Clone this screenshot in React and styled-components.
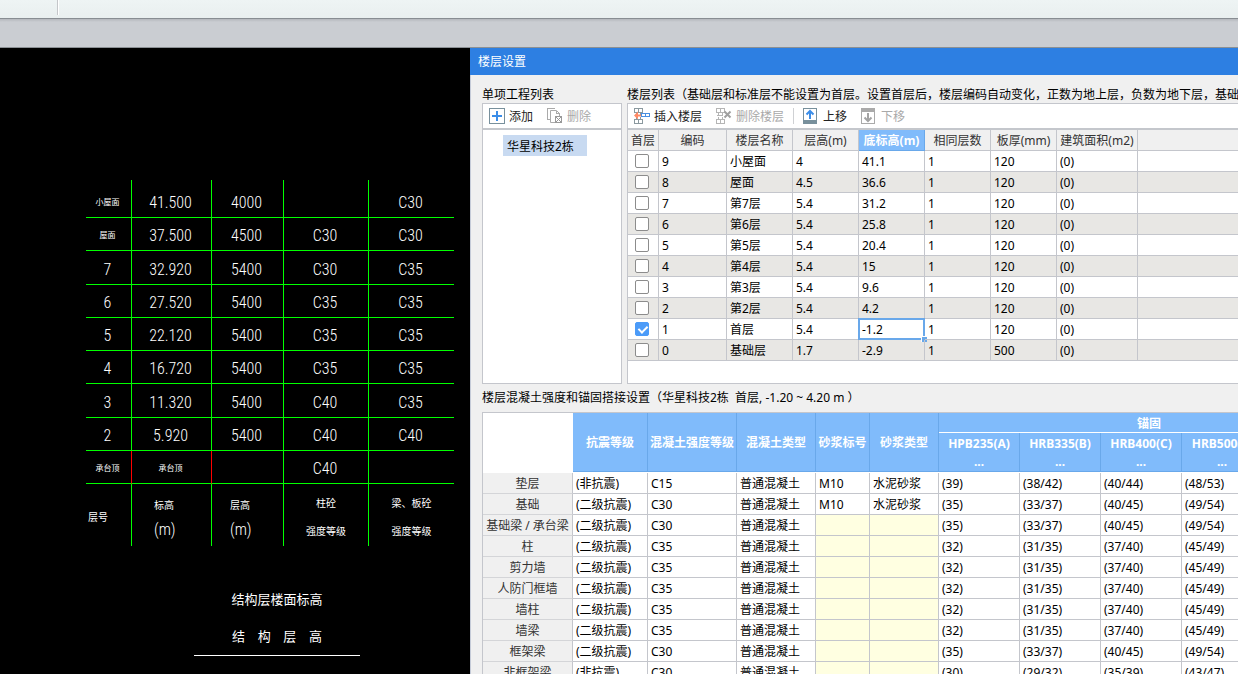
import React from "react";
import styled, { createGlobalStyle } from "styled-components";

const GlobalStyle = createGlobalStyle`
	* {
		box-sizing: border-box;
	}

	body {
		margin: 0;
		background: #000;
		color: #000;
		font: 12px/16px "Noto Sans", "Noto Sans CJK SC", sans-serif;
	}
`;

const Page = styled.div`
	display: flex;
	flex-direction: column;
	height: 100vh;
	overflow: hidden;
`;

const Ribbon = styled.header`
	flex: none;
	height: 19px;
	padding-left: 57px;
	background: linear-gradient(#eef4f4, #e9efef);
	border-bottom: 1px solid #888d92;
`;

const RibbonDivider = styled.div`
	width: 2px;
	height: 15px;
	background: #c4c6c9;
	border-right: 1px solid #fff;
`;

const Strip = styled.div`
	flex: none;
	height: 29px;
	background: linear-gradient(#b4b7bc, #cacdd2 3px);
	border-bottom: 1px solid #8b9094;
`;

const Workspace = styled.main`
	flex: 1;
	min-height: 0;
	display: grid;
	grid-template-columns: 470px minmax(0, 1fr);
`;

/* drawing */

const Drawing = styled.section`
	padding: 132px 16px 0 86px;
	background: #000;
	color: #fff;
	font-family: "Liberation Sans Narrow", "Roboto Condensed", "Liberation Sans",
		"Noto Sans CJK SC", sans-serif;
	overflow: hidden;
`;

const DrawingTable = styled.table`
	width: 100%;
	table-layout: fixed;
	border-spacing: 0;
`;

const DrawingCell = styled.td`
	padding: 4px 2px 0 0;
	text-align: center;
	line-height: 20px;
	font-size: ${(p) => (p.$small ? "8px" : "16px")};
	font-weight: ${(p) => (p.$small ? "normal" : 300)};
	border-right: 1px solid ${(p) => (p.$red ? "#f00" : "#0f0")};
	border-bottom: 1px solid #0f0;

	&:last-child {
		border-right: 0;
	}
`;

const DrawingRow = styled.tr`
	height: 33px;

	&:first-child {
		height: 38px;
	}

	&:first-child ${DrawingCell} {
		padding-top: 8px;
	}

	&:nth-child(4n + 3) {
		height: 34px;
	}
`;

const LegendRow = styled.tr`
	height: 62px;
`;

const LegendCell = styled.th`
	padding: 6px 0 0 ${(p) => p.$indent || 0}px;
	text-align: ${(p) => (p.$indent ? "left" : "center")};
	font-size: 10px;
	font-weight: normal;
	line-height: ${(p) => (p.$indent ? 24 : 28)}px;
	border-right: 1px solid #0f0;

	&:last-child {
		border-right: 0;
	}
`;

const Unit = styled.div`
	font-size: 16px;
	font-weight: 300;
`;

const DrawingTitle = styled.div`
	width: 166px;
	margin: 35px 0 0 108px;
	font-size: 13px;
	line-height: 37px;
	text-align: center;
	border-bottom: 1px solid #fff;
`;

const SpacedLine = styled.div`
	display: flex;
	justify-content: space-between;
	padding: 0 38px;
`;

/* dialog */

const Dialog = styled.section`
	display: flex;
	flex-direction: column;
	min-width: 0;
	background: #f0f0f0;
	overflow: hidden;
`;

const TitleBar = styled.h1`
	flex: none;
	margin: 0;
	padding-left: 8px;
	background: #2d7fe2;
	color: #fff;
	font-size: 12px;
	font-weight: normal;
	line-height: 27px;
`;

const DialogBody = styled.div`
	flex: 1;
	min-height: 0;
	padding: 11px 0 0 11px;
	border-left: 1px solid #c5cbd8;
	overflow: hidden;
`;

const Groups = styled.div`
	display: grid;
	grid-template-columns: 140px minmax(0, 1fr);
	column-gap: 5px;
`;

const Group = styled.section`
	display: flex;
	flex-direction: column;
	min-width: 0;
`;

const GroupTitle = styled.h2`
	margin: 0;
	font-size: 12px;
	font-weight: normal;
	line-height: ${(p) => (p.$tall ? 28 : 17)}px;
	white-space: pre;
`;

const Panel = styled.div`
	flex: 1;
	padding-bottom: ${(p) => (p.$padded ? 22 : 0)}px;
	background: #fff;
	border: 1px solid #c4c6cc;
	border-right-width: ${(p) => (p.$open ? 0 : 1)}px;
	overflow: hidden;
`;

const Toolbar = styled.div`
	display: flex;
	align-items: center;
	gap: 4px;
	height: 26px;
	padding-left: 1px;
	border-bottom: 2px solid #c4c7cc;
`;

const ToolButton = styled.button`
	display: flex;
	align-items: center;
	gap: 4px;
	height: 22px;
	padding: 0 5px;
	border: 0;
	background: none;
	font: inherit;
	color: #222;
	white-space: nowrap;

	&:disabled {
		color: #a9a9a9;
	}

	svg {
		flex: none;
	}
`;

const ToolLabel = styled.span`
	padding-top: 2px;
`;

const ToolDivider = styled.div`
	width: 1px;
	height: 16px;
	background: #cfd1d4;
`;

const ProjectList = styled.ul`
	margin: 5px 34px 0 20px;
	padding: 0;
	list-style: none;
`;

const ProjectItem = styled.li`
	padding: 2px 0 0 4px;
	background: #c8daf1;
	line-height: 19px;
`;

const Grid = styled.table`
	width: 100%;
	table-layout: fixed;
	border-spacing: 0;
	white-space: nowrap;
`;

const HeadCell = styled.th`
	height: 21px;
	padding: 2px 0 0;
	background: ${(p) => (p.$active ? "#80bbfb" : "#f0f0f0")};
	color: ${(p) => (p.$active ? "#fff" : "#333")};
	font-weight: ${(p) => (p.$active ? "bold" : "normal")};
	border-right: 1px solid ${(p) => (p.$active ? "#69a8ea" : "#c4c6cc")};
	border-bottom: 1px solid ${(p) => (p.$active ? "#69a8ea" : "#c4c6cc")};
`;

const Cell = styled.td`
	position: relative;
	height: 21px;
	padding: 2px 0 0 3px;
	border-right: 1px solid #c4c6cc;
	border-bottom: 1px solid #c4c6cc;
	background: ${(p) => (p.$disabled ? "#ffffe1" : "transparent")};
`;

const FloorRow = styled.tr`
	&:nth-child(even) {
		background: #e8e7e4;
	}

	${Cell}:first-child {
		padding-top: 0;
	}

	${Cell}:last-child,
	${HeadCell}:last-child {
		border-right: 0;
	}
`;

const Selection = styled.div`
	position: absolute;
	inset: -1px;
	border: 2px solid #69a8ea;

	&::after {
		content: "";
		position: absolute;
		right: -4px;
		bottom: -4px;
		width: 5px;
		height: 5px;
		background: #69a8ea;
		border-top: 1px solid #fff;
		border-left: 1px solid #fff;
	}
`;

const CheckBox = styled.input.attrs({ type: "checkbox" })`
	appearance: none;
	display: block;
	position: relative;
	width: 14px;
	height: 14px;
	margin: 0 0 0 4px;
	background: #fff;
	border: 1px solid #8c8c8c;
	border-radius: 2px;

	&:checked {
		background: #4b9bf8;
		border-color: #4b9bf8;
	}

	&:checked::after {
		content: "";
		position: absolute;
		left: 4px;
		top: 1px;
		width: 4px;
		height: 7px;
		border: solid #fff;
		border-width: 0 2px 2px 0;
		transform: rotate(45deg);
	}
`;

const BlueHead = styled.th`
	height: ${(p) => (p.$group ? 20 : 39)}px;
	padding: ${(p) => (p.$group ? 2 : 1)}px 0 0;
	background: #80bbfb;
	color: #fff;
	font-weight: bold;
	line-height: ${(p) => (p.$group ? 17 : 18)}px;
	border-right: 1px solid #69a8ea;
	border-bottom: 1px solid ${(p) => (p.$group ? "#fff" : "#69a8ea")};
`;

const Corner = styled.td`
	background: #fff;
`;

const RowHead = styled.th`
	padding: 2px 0 0;
	background: #f0f0f0;
	color: #333;
	font-weight: normal;
	border-right: 1px solid #c4c6cc;
	border-bottom: 1px solid #d4d5d8;
`;

const StrengthBody = styled.tbody`
	&::before {
		content: "";
		display: table-row;
		height: 1px;
	}
`;

/* icons */

const Icon = ({ children }) => (
	<svg
		width="16"
		height="16"
		viewBox="0 0 16 16"
		fill="none"
		shapeRendering="crispEdges"
		aria-hidden="true"
	>
		{children}
	</svg>
);

const AddIcon = () => (
	<Icon>
		<rect x="0.5" y="0.5" width="15" height="15" stroke="#78909c" />
		<path d="M3 8h10M8 3v10" stroke="#3b8de8" strokeWidth="2" />
	</Icon>
);

const DeleteIcon = () => (
	<Icon>
		<path d="M2.5 11.5h-2v-11h7" stroke="#aaa" />
		<path
			d="M8 14.5H3.5v-12h6l3 3V8"
			stroke="#aaa"
			shapeRendering="auto"
		/>
		<path d="M9.5 2.5v3h3" stroke="#aaa" />
		<rect x="8.5" y="8.5" width="6" height="6" stroke="#999" />
		<path d="M9 9l5 5M14 9l-5 5" stroke="#999" />
	</Icon>
);

const Bricks = ({ stroke }) => (
	<path
		d="M0.5 0.5h8v4h-8zM4.5 0.5v4M2.5 4.5v2M6.5 4.5v2M2.5 9v2M6.5 9v2M0.5 11.5h8v4h-8zM4.5 11.5v4"
		stroke={stroke}
	/>
);

const InsertFloorIcon = () => (
	<Icon>
		<Bricks stroke="#8b999f" />
		<path d="M0 7.5l4-4v3h3v2H4v3z" fill="#ff8a65" shapeRendering="auto" />
		<path d="M7.5 5.5h8v3h-8zM11.5 5.5v3" stroke="#4a90e2" />
	</Icon>
);

const DeleteFloorIcon = () => (
	<Icon>
		<Bricks stroke="#b5b5b5" />
		<path d="M0.5 7.5h6" stroke="#b5b5b5" />
		<path
			d="M8.5 3.5l6 6M14.5 3.5l-6 6"
			stroke="#a0a0a0"
			strokeWidth="2"
			shapeRendering="auto"
		/>
	</Icon>
);

const MoveUpIcon = () => (
	<Icon>
		<path d="M0.5 0.5h13v13h-13z" stroke="#78909c" />
		<path d="M0 12h14v4H0z" fill="#78909c" />
		<path
			d="M7 11V3.5M3.5 6.5L7 3l3.5 3.5"
			stroke="#3b8de8"
			strokeWidth="2"
			shapeRendering="auto"
		/>
	</Icon>
);

const MoveDownIcon = () => (
	<Icon>
		<path d="M0.5 2.5h13v13h-13z" stroke="#aaa" />
		<path d="M0 0h14v4H0z" fill="#aaa" />
		<path
			d="M7 5v7.5M3.5 9.5L7 13l3.5-3.5"
			stroke="#a3a3a3"
			strokeWidth="2"
			shapeRendering="auto"
		/>
	</Icon>
);

/* data */

const drawingRows = [
	["小屋面", "41.500", "4000", "", "C30"],
	["屋面", "37.500", "4500", "C30", "C30"],
	["7", "32.920", "5400", "C30", "C35"],
	["6", "27.520", "5400", "C35", "C35"],
	["5", "22.120", "5400", "C35", "C35"],
	["4", "16.720", "5400", "C35", "C35"],
	["3", "11.320", "5400", "C40", "C35"],
	["2", "5.920", "5400", "C40", "C40"],
	["承台顶", "承台顶", "", "C40", ""],
];

const floorColumns = [
	["首层", 31],
	["编码", 68],
	["楼层名称", 66],
	["层高(m)", 66],
	["底标高(m)", 66],
	["相同层数", 66],
	["板厚(mm)", 66],
	["建筑面积(m2)", 81],
];

const floors = [
	["9", "小屋面", "4", "41.1", "1", "120", "(0)"],
	["8", "屋面", "4.5", "36.6", "1", "120", "(0)"],
	["7", "第7层", "5.4", "31.2", "1", "120", "(0)"],
	["6", "第6层", "5.4", "25.8", "1", "120", "(0)"],
	["5", "第5层", "5.4", "20.4", "1", "120", "(0)"],
	["4", "第4层", "5.4", "15", "1", "120", "(0)"],
	["3", "第3层", "5.4", "9.6", "1", "120", "(0)"],
	["2", "第2层", "5.4", "4.2", "1", "120", "(0)"],
	["1", "首层", "5.4", "-1.2", "1", "120", "(0)"],
	["0", "基础层", "1.7", "-2.9", "1", "500", "(0)"],
];

const strengthColumns = [
	["抗震等级", 75],
	["混凝土强度等级", 89],
	["混凝土类型", 79],
	["砂浆标号", 54],
	["砂浆类型", 69],
];

const steels = ["HPB235(A)", "HRB335(B)", "HRB400(C)", "HRB500(E)"];

const second = "(二级抗震)";
const none = "(非抗震)";
const plain = "普通混凝土";

const strengths = [
	["垫层", none, "C15", plain, "M10", "水泥砂浆", "(39)", "(38/42)", "(40/44)", "(48/53)"],
	["基础", second, "C30", plain, "M10", "水泥砂浆", "(35)", "(33/37)", "(40/45)", "(49/54)"],
	["基础梁 / 承台梁", second, "C30", plain, "", "", "(35)", "(33/37)", "(40/45)", "(49/54)"],
	["柱", second, "C35", plain, "", "", "(32)", "(31/35)", "(37/40)", "(45/49)"],
	["剪力墙", second, "C35", plain, "", "", "(32)", "(31/35)", "(37/40)", "(45/49)"],
	["人防门框墙", second, "C35", plain, "", "", "(32)", "(31/35)", "(37/40)", "(45/49)"],
	["墙柱", second, "C35", plain, "", "", "(32)", "(31/35)", "(37/40)", "(45/49)"],
	["墙梁", second, "C35", plain, "", "", "(32)", "(31/35)", "(37/40)", "(45/49)"],
	["框架梁", second, "C30", plain, "", "", "(35)", "(33/37)", "(40/45)", "(49/54)"],
	["非框架梁", none, "C30", plain, "", "", "(30)", "(29/32)", "(35/39)", "(43/47)"],
];

const FloorDrawing = () => (
	<Drawing>
		<DrawingTable>
			<colgroup>
				<col width="46" />
				<col width="80" />
				<col width="72" />
				<col width="85" />
				<col />
			</colgroup>
			<tbody>
				{drawingRows.map((row, i) => (
					<DrawingRow key={row[0]}>
						{row.map((text, j) => (
							<DrawingCell
								key={j}
								$small={/[^\w.]/.test(text)}
								$red={i === drawingRows.length - 1 && j < 2}
							>
								{text}
							</DrawingCell>
						))}
					</DrawingRow>
				))}
				<LegendRow>
					<LegendCell $indent={2}>层号</LegendCell>
					<LegendCell $indent={22}>
						标高
						<Unit>(m)</Unit>
					</LegendCell>
					<LegendCell $indent={18}>
						层高
						<Unit>(m)</Unit>
					</LegendCell>
					<LegendCell>
						柱砼
						<br />
						强度等级
					</LegendCell>
					<LegendCell>
						梁、板砼
						<br />
						强度等级
					</LegendCell>
				</LegendRow>
			</tbody>
		</DrawingTable>
		<DrawingTitle>
			<div>结构层楼面标高</div>
			<SpacedLine>
				<span>结</span>
				<span>构</span>
				<span>层</span>
				<span>高</span>
			</SpacedLine>
		</DrawingTitle>
	</Drawing>
);

const FloorTable = () => (
	<Grid>
		<colgroup>
			{floorColumns.map(([name, width]) => (
				<col key={name} width={width} />
			))}
			<col />
		</colgroup>
		<thead>
			<FloorRow>
				{floorColumns.map(([name]) => (
					<HeadCell key={name} $active={name === "底标高(m)"}>
						{name}
					</HeadCell>
				))}
				<HeadCell />
			</FloorRow>
		</thead>
		<tbody>
			{floors.map((floor) => (
				<FloorRow key={floor[0]}>
					<Cell>
						<CheckBox
							aria-label={floor[1]}
							defaultChecked={floor[0] === "1"}
						/>
					</Cell>
					{floor.map((text, i) => (
						<Cell key={i}>
							{text}
							{text === "-1.2" && <Selection />}
						</Cell>
					))}
					<Cell />
				</FloorRow>
			))}
		</tbody>
	</Grid>
);

const StrengthTable = () => (
	<Grid>
		<colgroup>
			<col width="90" />
			{strengthColumns.map(([name, width]) => (
				<col key={name} width={width} />
			))}
			{steels.map((name) => (
				<col key={name} width="81" />
			))}
			<col width="97" />
		</colgroup>
		<thead>
			<tr>
				<Corner rowSpan={2} />
				{strengthColumns.map(([name]) => (
					<BlueHead key={name} rowSpan={2}>
						{name}
					</BlueHead>
				))}
				<BlueHead $group colSpan={5}>
					锚固
				</BlueHead>
			</tr>
			<tr>
				{steels.map((name) => (
					<BlueHead key={name}>
						{name}
						<br />
						...
					</BlueHead>
				))}
				<BlueHead />
			</tr>
		</thead>
		<StrengthBody>
			{strengths.map(([name, ...values]) => (
				<tr key={name}>
					<RowHead>{name}</RowHead>
					{values.map((text, i) => (
						<Cell key={i} $disabled={!text}>
							{text}
						</Cell>
					))}
					<Cell />
				</tr>
			))}
		</StrengthBody>
	</Grid>
);

const App = () => (
	<Page>
		<GlobalStyle />
		<Ribbon>
			<RibbonDivider />
		</Ribbon>
		<Strip />
		<Workspace>
			<FloorDrawing />
			<Dialog>
				<TitleBar>楼层设置</TitleBar>
				<DialogBody>
					<Groups>
						<Group>
							<GroupTitle>单项工程列表</GroupTitle>
							<Panel>
								<Toolbar>
									<ToolButton>
										<AddIcon />
										<ToolLabel>添加</ToolLabel>
									</ToolButton>
									<ToolButton disabled>
										<DeleteIcon />
										<ToolLabel>删除</ToolLabel>
									</ToolButton>
								</Toolbar>
								<ProjectList>
									<ProjectItem>华星科技2栋</ProjectItem>
								</ProjectList>
							</Panel>
						</Group>
						<Group>
							<GroupTitle>
								楼层列表（基础层和标准层不能设置为首层。设置首层后，楼层编码自动变化，正数为地上层，负数为地下层，基础
							</GroupTitle>
							<Panel $open $padded>
								<Toolbar>
									<ToolButton>
										<InsertFloorIcon />
										<ToolLabel>插入楼层</ToolLabel>
									</ToolButton>
									<ToolButton disabled>
										<DeleteFloorIcon />
										<ToolLabel>删除楼层</ToolLabel>
									</ToolButton>
									<ToolDivider />
									<ToolButton>
										<MoveUpIcon />
										<ToolLabel>上移</ToolLabel>
									</ToolButton>
									<ToolButton disabled>
										<MoveDownIcon />
										<ToolLabel>下移</ToolLabel>
									</ToolButton>
								</Toolbar>
								<FloorTable />
							</Panel>
						</Group>
					</Groups>
					<GroupTitle $tall>
						{"楼层混凝土强度和锚固搭接设置（华星科技2栋  首层, -1.20 ~ 4.20 m ）"}
					</GroupTitle>
					<Panel $open>
						<StrengthTable />
					</Panel>
				</DialogBody>
			</Dialog>
		</Workspace>
	</Page>
);

export default App;
